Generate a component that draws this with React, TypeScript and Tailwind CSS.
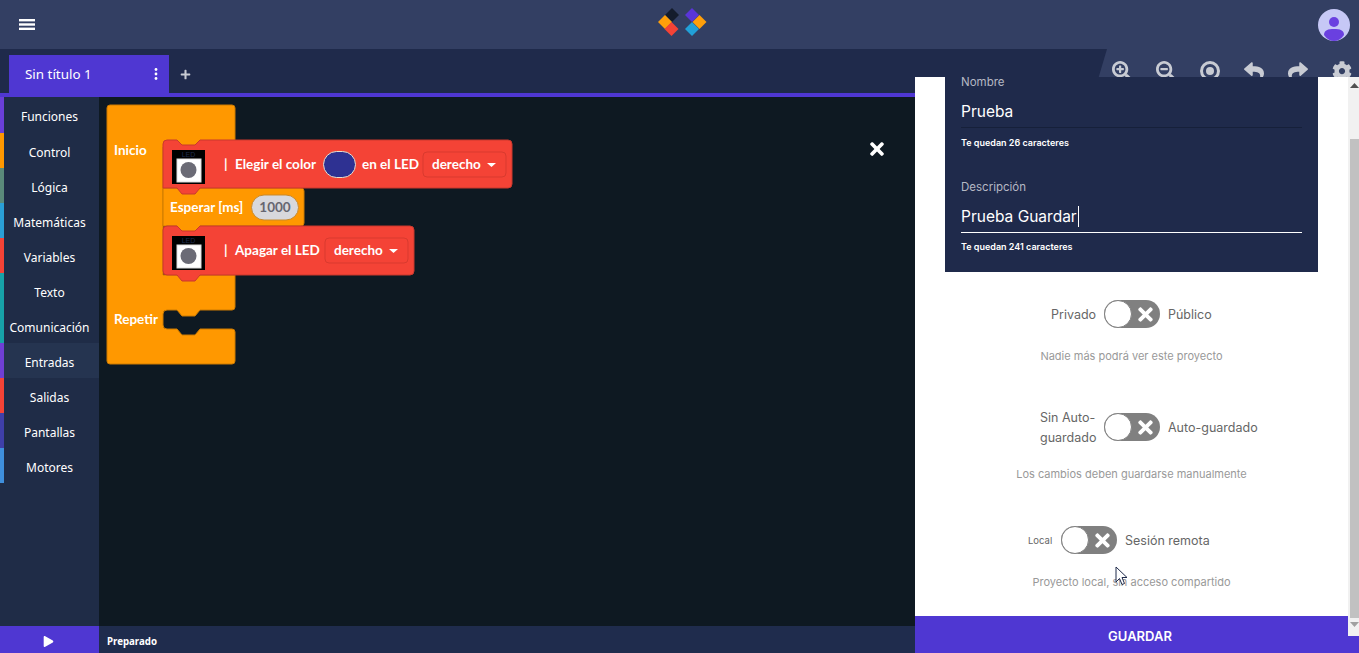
import { FaCog, FaPlay, FaPlus, FaReply, FaSearchMinus, FaSearchPlus, FaShare, FaTimes } from "react-icons/fa";

const categories = [
  { name: "Funciones", bar: "bg-[#6a3fd8]" },
  { name: "Control", bar: "bg-[#ff9800]" },
  { name: "Lógica", bar: "bg-[#5a8a7a]" },
  { name: "Matemáticas", bar: "bg-[#2a9fd6]" },
  { name: "Variables", bar: "bg-[#f44336]" },
  { name: "Texto", bar: "bg-[#17a2a8]" },
  { name: "Comunicación", bar: "bg-[#17a2a8]" },
  { name: "Entradas", bar: "bg-[#6f3fd4]", active: true },
  { name: "Salidas", bar: "bg-[#f44336]" },
  { name: "Pantallas", bar: "bg-[#3f3fa8]" },
  { name: "Motores", bar: "bg-[#3f8fdc]" },
];

const Diamond = ({ cx, cy, fill }: { cx: number; cy: number; fill: string }) => (
  <polygon points={`${cx},${cy - 7} ${cx + 7},${cy} ${cx},${cy + 7} ${cx - 7},${cy}`} fill={fill} />
);

const Logo = () => (
  <svg width="60" height="32" viewBox="0 0 60 32">
    <Diamond cx={18} cy={7} fill="#141c2c" />
    <Diamond cx={11} cy={14} fill="#ff9f0a" />
    <Diamond cx={17.5} cy={21} fill="#f44336" />
    <Diamond cx={38} cy={7} fill="#5a35d8" />
    <Diamond cx={38} cy={21} fill="#21a0d8" />
    <Diamond cx={45.5} cy={14} fill="#ff9f0a" />
  </svg>
);

const Avatar = () => (
  <svg width="32" height="32" viewBox="0 0 32 32">
    <circle cx="16" cy="16" r="16" fill="#c6c8f6" />
    <circle cx="16" cy="13" r="5" fill="#6a40e0" />
    <path d="M6 26 C6 21 10 20 16 20 C22 20 26 21 26 26 C23 30 20 32 16 32 C12 32 9 30 6 26Z" fill="#6a40e0" />
  </svg>
);

const LedIcon = ({ y }: { y: number }) => (
  <g>
    <rect x="172" y={y} width="33" height="34" fill="#000" />
    <text x="188.5" y={y + 7} textAnchor="middle" fontSize="7" fill="#1f2c4d" fontFamily="'Liberation Sans', sans-serif">LED</text>
    <rect x="177" y={y + 9} width="24" height="23" fill="#fff" stroke="#ddd" />
    <circle cx="188.5" cy={y + 20} r="8" fill="#6b6b76" />
  </g>
);

const blockText = { fontFamily: "Lato, sans-serif", fontWeight: 700, fontSize: 13.5, fill: "#fff" };

const Dropdown = ({ x, y }: { x: number; y: number }) => (
  <g>
    <rect x={x} y={y} width="83" height="25" rx="4" fill="#f44336" stroke="#d93a2e" />
    <text x={x + 9} y={y + 17} {...blockText}>derecho</text>
    <polygon points={`${x + 64},${y + 11} ${x + 73},${y + 11} ${x + 68.5},${y + 15}`} fill="#fff" />
  </g>
);

const Blocks = () => (
  <svg className="absolute left-0 top-0" width="915" height="653" viewBox="0 0 915 653">
    <path
      d="M110 105 H232 Q235 105 235 108 V147 H163 V275 H235 V307 Q235 310 232 310 H200 L195 316 H182 L177 310 H167 Q163 310 163 314 V325 Q163 329 167 329 H177 L182 335 H195 L200 329 H232 Q235 329 235 332 V361 Q235 364 232 364 H110 Q107 364 107 361 V108 Q107 105 110 105Z"
      fill="#ff9800"
      stroke="#cc7a00"
    />
    <path
      d="M163 188 H301 Q304 188 304 191 V223 Q304 226 301 226 H200 L195 232 H182 L177 226 H163 Z"
      fill="#ff9800"
      stroke="#cc7a00"
    />
    <path
      d="M167 140 H177 L182 145 H195 L200 140 H508 Q512 140 512 144 V184 Q512 188 508 188 H200 L195 194 H182 L177 188 H163 V144 Q163 140 167 140Z"
      fill="#f44336"
      stroke="#c9392d"
    />
    <path
      d="M167 226 H177 L182 231 H195 L200 226 H410 Q414 226 414 230 V271 Q414 275 410 275 H200 L195 281 H182 L177 275 H167 Q163 275 163 271 V230 Q163 226 167 226Z"
      fill="#f44336"
      stroke="#c9392d"
    />
    <text x="114" y="155" {...blockText}>Inicio</text>
    <text x="114" y="324" {...blockText}>Repetir</text>
    <LedIcon y={150} />
    <text x="224" y="169" {...blockText}>|</text>
    <text x="235" y="169" {...blockText}>Elegir el color</text>
    <rect x="323.5" y="151.5" width="32" height="26" rx="13" fill="#2e3192" stroke="#e8e0d0" />
    <text x="362" y="169" {...blockText}>en el LED</text>
    <Dropdown x={423} y={152} />
    <text x="170" y="212" {...blockText}>Esperar [ms]</text>
    <rect x="251.5" y="195" width="47" height="25" rx="12.5" fill="#d8d8dc" stroke="#c9892a" />
    <text x="275" y="212" textAnchor="middle" {...blockText} fill="#666670">1000</text>
    <LedIcon y={236} />
    <text x="224" y="255" {...blockText}>|</text>
    <text x="235" y="255" {...blockText}>Apagar el LED</text>
    <Dropdown x={325} y={238} />
  </svg>
);

const Toggle = () => (
  <div className="flex h-[28px] w-[56px] shrink-0 items-center rounded-full bg-[#808080]">
    <div className="h-[28px] w-[28px] shrink-0 rounded-full border border-[#808080] bg-white" />
    <FaTimes className="ml-[3px] text-[21px] text-white" />
  </div>
);

const panelFont = "font-['Inter',sans-serif]";

const App = () => {
  return (
    <div className="relative h-[653px] w-[1359px] overflow-hidden bg-[#0e1922] font-['Noto_Sans',sans-serif]">
      <header className="relative flex h-[49px] items-center justify-between bg-[#333f63] pl-[19px] pr-[9px]">
        <svg width="16" height="11" viewBox="0 0 16 11">
          <rect y="0" width="16" height="2.4" fill="#fff" />
          <rect y="4.3" width="16" height="2.4" fill="#fff" />
          <rect y="8.6" width="16" height="2.4" fill="#fff" />
        </svg>
        <div className="absolute left-[654px] top-[8px]">
          <Logo />
        </div>
        <Avatar />
      </header>

      <div className="relative flex h-[44px] items-end bg-[#1f2a4b] pl-[9px]">
        <div className="flex h-[38px] w-[160px] items-center justify-between bg-[#4f37d2] pl-[16px] pr-[11px] text-[13.4px] text-white">
          <span className="pt-[1px]">Sin título 1</span>
          <svg width="4" height="12" viewBox="0 0 4 12">
            <circle cx="2" cy="1.5" r="1.4" fill="#fff" />
            <circle cx="2" cy="6" r="1.4" fill="#fff" />
            <circle cx="2" cy="10.5" r="1.4" fill="#fff" />
          </svg>
        </div>
        <div className="flex h-[38px] w-[32px] items-center justify-center">
          <FaPlus className="text-[11px] text-[#c8cbd3]" />
        </div>
        <div className="absolute right-0 top-0 flex h-[44px] w-[265px] items-start gap-[24px] bg-[#333f63] pl-[18px] pt-[12px] text-[20px] text-[#c8cbd3] [clip-path:polygon(13px_0,100%_0,100%_100%,0_100%)]">
          <FaSearchPlus />
          <FaSearchMinus />
          <svg width="20" height="20" viewBox="0 0 20 20">
            <circle cx="10" cy="10" r="8.5" fill="none" stroke="currentColor" strokeWidth="3" />
            <circle cx="10" cy="10" r="4" fill="currentColor" />
          </svg>
          <FaReply />
          <FaShare />
          <FaCog />
        </div>
      </div>

      <div className="h-[4px] bg-[#4f37d2]" />

      <div className="flex h-[529px]">
        <nav className="w-[99px] bg-[#1f2c47]">
          {categories.map((c) => (
            <div key={c.name} className={`flex h-[35px] first:h-[36px] ${c.active ? "bg-[#253450]" : ""}`}>
              <div className={`relative z-10 w-[4px] ${c.bar}`} />
              <div className="-ml-[4px] flex flex-1 items-center justify-center pt-[4px] text-[12px] text-white">{c.name}</div>
            </div>
          ))}
        </nav>
        <main className="flex-1" />
      </div>

      <footer className="flex h-[27px] bg-[#1f2c4d]">
        <div className="flex w-[99px] items-center justify-center bg-[#4f37d2] pr-[2px] pt-[3px]">
          <FaPlay className="text-[11px] text-white" />
        </div>
        <div className="flex items-center pl-[8px] pt-[5px] text-[9.7px] font-bold text-white">Preparado</div>
      </footer>

      <Blocks />

      <FaTimes className="absolute left-[867px] top-[139px] text-[20px] text-white" />

      <aside className={`absolute bottom-0 left-[915px] right-0 top-[77px] bg-white ${panelFont}`}>
        <div className="ml-[30px] h-[195px] w-[373px] bg-[#1f2a4b] px-[16px]">
          <div className="text-[11.5px] leading-[11px] text-[#b5b8c4]">Nombre</div>
          <div className="mt-[13px] border-b border-[#16203a] pb-[5px] text-[15.5px] leading-[21px] text-white">Prueba</div>
          <div className="mt-[9px] text-[9px] font-semibold leading-[12px] text-white">Te quedan 26 caracteres</div>
          <div className="mt-[32px] text-[11.5px] leading-[12px] text-[#b5b8c4]">Descripción</div>
          <div className="mt-[13px] flex border-b border-white pb-[5px] text-[15.5px] leading-[21px] text-white">
            Prueba Guardar<span className="ml-[1px] w-[1px] bg-white" />
          </div>
          <div className="mt-[8px] text-[9px] font-semibold leading-[12px] text-white">Te quedan 241 caracteres</div>
        </div>

        <div className="ml-[136px] mt-[28px] flex items-center gap-[8px] text-[12.5px] text-[#666]">
          <span className="w-[45px] pt-[2px]">Privado</span>
          <Toggle />
          <span className="pt-[2px]">Público</span>
        </div>
        <div className="mt-[20px] w-[433px] text-center text-[11px] leading-[16px] text-[#999]">Nadie más podrá ver este proyecto</div>

        <div className="ml-[125px] mt-[42px] flex items-center gap-[8px] text-[12.5px] text-[#666]">
          <span className="w-[56px] pt-[2px] leading-[20px]">Sin Auto-guardado</span>
          <Toggle />
          <span className="pt-[2px]">Auto-guardado</span>
        </div>
        <div className="mt-[18px] w-[433px] text-center text-[11px] leading-[16px] text-[#999]">Los cambios deben guardarse manualmente</div>

        <div className="ml-[113px] mt-[44px] flex items-center gap-[8px] text-[12.5px] text-[#666]">
          <span className="w-[25px] pt-[2px] text-[9.5px]">Local</span>
          <Toggle />
          <span className="pt-[2px]">Sesión remota</span>
        </div>
        <div className="mt-[20px] w-[433px] text-center text-[11px] leading-[16px] text-[#999]">Proyecto local, sin acceso compartido</div>

        <button className="absolute bottom-0 left-0 right-0 flex h-[37px] items-center justify-center bg-[#4f37d2] pl-[6px] pt-[5px] text-[13px] font-semibold text-white">
          GUARDAR
        </button>

        <div className="absolute right-0 top-0 flex h-[559px] w-[11px] flex-col bg-[#f1f1f1] pl-[2px]">
          <svg className="mt-[6px]" width="9" height="5" viewBox="0 0 9 5"><polygon points="4.5,0 9,5 0,5" fill="#505050" /></svg>
          <div className="mt-[51px] h-[479px] bg-[#c1c1c1]" />
          <svg className="mt-[4px]" width="9" height="5" viewBox="0 0 9 5"><polygon points="0,0 9,0 4.5,5" fill="#a0a0a0" /></svg>
        </div>
      </aside>

      <svg className="absolute left-[1115px] top-[566px]" width="13" height="20" viewBox="0 0 13 20">
        <path d="M1 1 V16 L4.5 12.5 L7 18.5 L9.5 17.5 L7 11.5 H12 Z" fill="#fff" stroke="#1f2a4b" strokeWidth="1" />
      </svg>
    </div>
  );
};

export default App;
